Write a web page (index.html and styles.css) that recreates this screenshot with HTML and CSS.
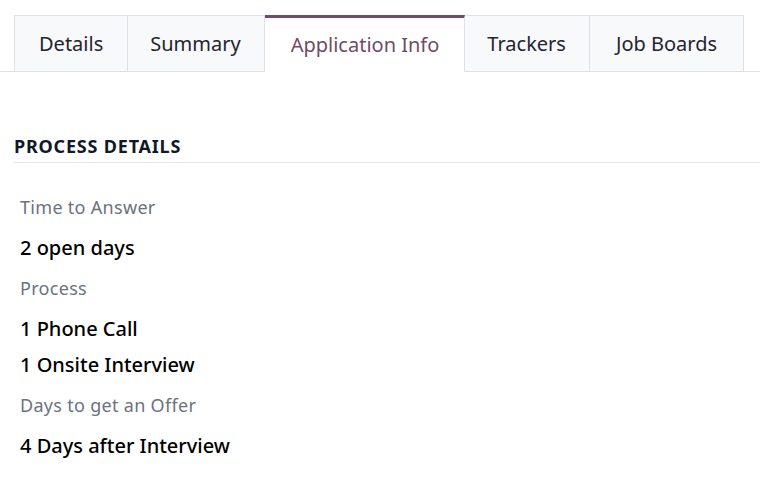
FILE: index.html
```html
<!DOCTYPE html>
<html lang="en">
<head>
  <meta charset="UTF-8">
  <meta name="viewport" content="width=device-width, initial-scale=1.0">
  <title>Application Info</title>
  <link rel="stylesheet" href="styles.css">
</head>
<body>
  <ul class="tabs">
    <li class="tab">Details</li>
    <li class="tab">Summary</li>
    <li class="tab active">Application Info</li>
    <li class="tab">Trackers</li>
    <li class="tab">Job Boards</li>
  </ul>
  <div class="sheet">
    <h4 class="group-title">PROCESS DETAILS</h4>
    <div class="fields">
      <div class="label">Time to Answer</div>
      <div class="value">2 open days</div>
      <div class="label">Process</div>
      <div class="value">1 Phone Call</div>
      <div class="value">1 Onsite Interview</div>
      <div class="label">Days to get an Offer</div>
      <div class="value">4 Days after Interview</div>
    </div>
  </div>
</body>
</html>
```

FILE: styles.css
```css
html,body{
  margin: 0;
  background: #fff;
  font-family: "Noto Sans", "Open Sans", sans-serif;
  color: #111827;
}
.tabs{
  display: flex;
  list-style: none;
  margin: 15px 0 0;
  padding: 0 0 0 14px;
  border-bottom: 1px solid #dee2e6;
}
.tab{
  height: 55px;
  line-height: 56px;
  padding: 0 24px;
  margin-bottom: -1px;
  font-size: 20px;
  color: #1f2430;
  background: #f8f9fa;
  border: 1px solid #dee2e6;
  border-left: none;
}
.tab:first-child{
  border-left: 1px solid #dee2e6;
}
.tab:nth-child(2){
  padding: 0 23px 0 22px;
}
.tab:nth-child(4){
  padding: 0 23px 0 22px;
}
.tab:last-child{
  padding: 0 26px;
}
/* the open tab merges with the sheet below it */
.tab.active{
  background: #fff;
  color: #714b67;
  border-top: 3px solid #714b67;
  height: 53px;
  line-height: 54px;
  padding: 0 25px 0 26px;
  border-bottom-color: #fff;
}
.sheet{
  padding: 0 0 0 14px;
}
.group-title{
  margin: 62px 0 0;
  padding-bottom: 3px;
  font-size: 18px;
  line-height: 25px;
  letter-spacing: 0.8px;
  font-weight: 700;
  color: #111827;
  border-bottom: 1px solid #e5e7eb;
}
.fields{
  display: flex;
  flex-direction: column;
  padding: 22px 0 0 6px;
}
.label{
  font-size: 18px;
  letter-spacing: 0.3px;
  color: #6b7280;
  line-height: 45px;
}
.value{
  font-size: 20px;
  font-weight: 500;
  color: #000;
  line-height: 36px;
}
```
